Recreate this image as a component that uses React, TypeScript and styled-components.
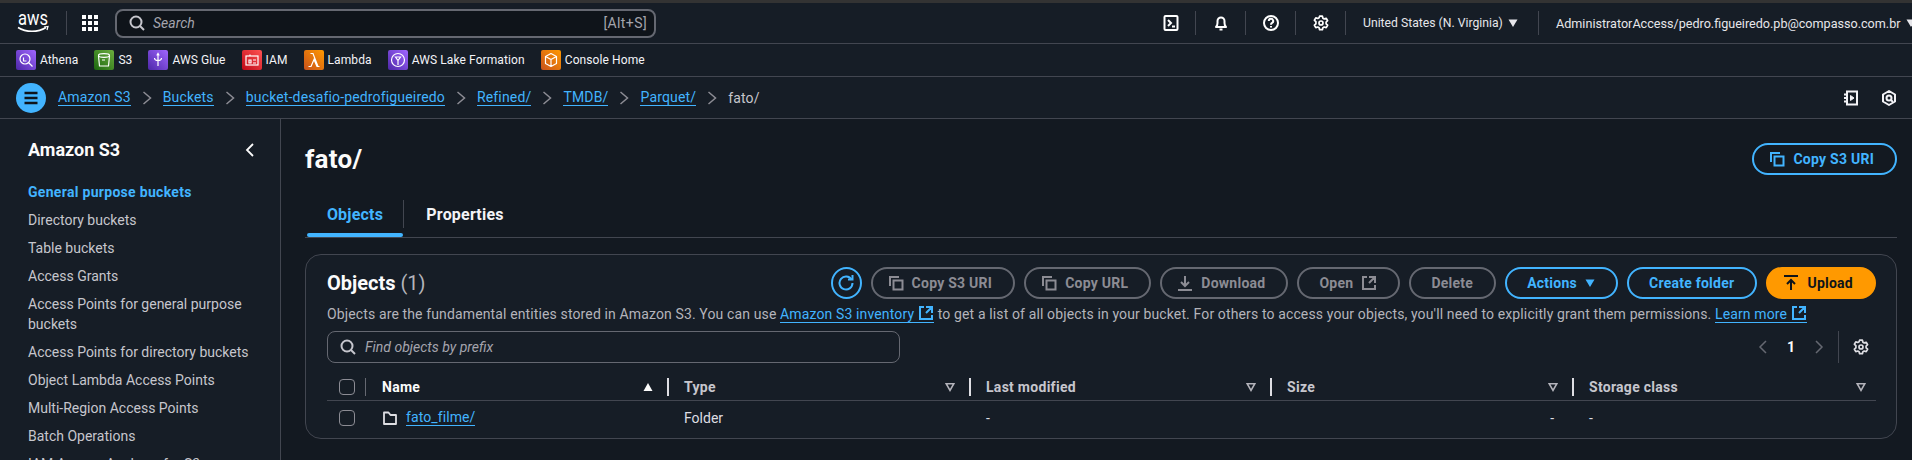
import React, { ReactNode } from 'react';
import styled, { createGlobalStyle } from 'styled-components';

const GlobalStyle = createGlobalStyle`
  html, body { margin: 0; padding: 0; background: #161d26; }
  body { font-family: Roboto, "Liberation Sans", sans-serif; font-size: 14px; color: #c6c6cd; }
  * { box-sizing: border-box; }
`;

const Page = styled.div`
  height: 100vh;
  overflow: hidden;
  display: flex;
  flex-direction: column;
  background: #161d26;
`;

const TopStrip = styled.div`
  height: 3px;
  background: #333;
`;

const TopBar = styled.header`
  height: 41px;
  display: flex;
  align-items: center;
  padding-left: 17px;
  border-bottom: 1px solid #424650;
`;

const Logo = styled.svg`
  width: 33px;
  height: 26px;
  display: block;
  overflow: visible;
  margin-right: 16px;
`;

const VRule = styled.span<{ $h?: number }>`
  width: 1px;
  height: ${(p) => p.$h ?? 24}px;
  background: #424650;
  flex: none;
`;

const GridBtn = styled.svg`
  width: 16px;
  height: 16px;
  margin: 0 17px 0 15px;
  color: #fff;
`;

const SearchBox = styled.div`
  width: 541px;
  height: 29px;
  display: flex;
  align-items: center;
  padding: 0 7px 0 12px;
  gap: 8px;
  background: #0f141a;
  border: 2px solid #656871;
  border-radius: 8px;
  color: #c6c6cd;
  font-size: 14px;
`;

const Placeholder = styled.span`
  font-style: italic;
  color: #a4a4ad;
  flex: 1;
`;

const Hint = styled.span`
  color: #a4a4ad;
  font-size: 14px;
  letter-spacing: 0.4px;
`;

const TopRight = styled.div`
  margin-left: auto;
  display: flex;
  align-items: center;
  color: #e6e6ea;
`;

const ToolBtn = styled.span`
  width: 49px;
  display: flex;
  justify-content: center;
  color: #fff;
`;

const Menu = styled.span<{ $w: number; $size: number }>`
  width: ${(p) => p.$w}px;
  display: flex;
  align-items: center;
  gap: 5px;
  padding-left: 17px;
  white-space: nowrap;
  font-size: ${(p) => p.$size}px;
`;

const FavBar = styled.nav`
  height: 33px;
  display: flex;
  align-items: center;
  padding-left: 16px;
  gap: 16px;
  border-bottom: 1px solid #424650;
`;

const Fav = styled.span`
  display: flex;
  align-items: center;
  gap: 4px;
  font-size: 12px;
  letter-spacing: 0.1px;
  color: #f3f3f7;
`;

const FavIcon = styled.svg<{ $a: string; $b: string }>`
  width: 20px;
  height: 20px;
  border-radius: 2px;
  background: linear-gradient(45deg, ${(p) => p.$a}, ${(p) => p.$b});
  color: #fff;
  flex: none;
`;

const Crumbs = styled.nav`
  height: 42px;
  display: flex;
  align-items: center;
  padding: 0 15px 0 16px;
  border-bottom: 1px solid #424650;
  font-size: 14px;
  letter-spacing: 0.16px;
`;

const Burger = styled.span`
  width: 30px;
  height: 30px;
  border-radius: 50%;
  background: #42b4ff;
  display: flex;
  align-items: center;
  justify-content: center;
  margin-right: 12px;
  color: #0f141a;
`;

const CrumbLink = styled.a`
  color: #42b4ff;
  border-bottom: 1px solid #42b4ff;
  line-height: 16px;
`;

const CrumbSep = styled.span`
  display: flex;
  color: #8c8c94;
  margin: 0 8px;
`;

const CrumbEnd = styled.span`
  color: #c6c6cd;
`;

const CrumbTools = styled.div`
  margin-left: auto;
  display: flex;
  gap: 22px;
  color: #f3f3f7;
`;

const Body = styled.div`
  flex: 1;
  min-height: 0;
  display: grid;
  grid-template-columns: 281px 1fr;
`;

const Side = styled.aside`
  border-right: 1px solid #424650;
  padding: 19px 22px 0 28px;
`;

const SideHead = styled.div`
  display: flex;
  align-items: center;
  justify-content: space-between;
  font-size: 18px;
  font-weight: 700;
  color: #fbfbfb;
  line-height: 24px;
  margin-bottom: 20px;
`;

const SideList = styled.ul`
  list-style: none;
  margin: 0 -6px 0 0;
  padding: 0;
  display: flex;
  flex-direction: column;
  gap: 8px;
`;

const SideItem = styled.li<{ $active?: boolean }>`
  line-height: 20px;
  font-size: 14px;
  color: ${(p) => (p.$active ? '#42b4ff' : '#c6c6cd')};
  font-weight: ${(p) => (p.$active ? 700 : 400)};
  letter-spacing: ${(p) => (p.$active ? '0.3px' : '0')};
`;

const Main = styled.main`
  background: #131921;
  padding: 23px 16px 0 24px;
`;

const TitleRow = styled.div`
  display: flex;
  align-items: center;
  justify-content: space-between;
  height: 34px;
`;

const Title = styled.h1`
  margin: 0;
  font-size: 26px;
  font-weight: 700;
  letter-spacing: 0.3px;
  color: #fbfbfb;
`;

const Tabs = styled.div`
  display: flex;
  align-items: flex-start;
  height: 38px;
  margin: 24px 0 16px;
  border-bottom: 1px solid #424650;
`;

const Tab = styled.span<{ $active?: boolean }>`
  width: ${(p) => (p.$active ? 97 : 122)}px;
  display: flex;
  align-items: center;
  justify-content: center;
  height: 28px;
  font-weight: 700;
  font-size: 16px;
  letter-spacing: 0.2px;
  color: ${(p) => (p.$active ? '#42b4ff' : '#f3f3f7')};
  position: relative;
  margin-left: ${(p) => (p.$active ? '2px' : '0')};
  border-right: ${(p) => (p.$active ? '1px solid #424650' : 'none')};
  &::after {
    content: '';
    display: ${(p) => (p.$active ? 'block' : 'none')};
    position: absolute;
    left: 0;
    right: 0;
    top: 33px;
    height: 4px;
    border-radius: 2px;
    background: #42b4ff;
  }
`;

const Card = styled.section`
  height: 185px;
  background: #161d26;
  border: 1px solid #424650;
  border-radius: 16px;
  padding: 12px 20px 0 21px;
`;

const CardHead = styled.div`
  display: flex;
  align-items: center;
  height: 32px;
`;

const CardTitle = styled.h2`
  margin: 0;
  font-size: 20px;
  font-weight: 700;
  color: #fbfbfb;
`;

const Count = styled.span`
  font-weight: 400;
  color: #b4b4bb;
`;

const Actions = styled.div`
  margin-left: auto;
  display: flex;
  align-items: center;
  gap: 9px;
`;

const Button = styled.span<{ $kind?: 'normal' | 'off' | 'primary'; $lead?: boolean }>`
  height: 32px;
  display: inline-flex;
  align-items: center;
  justify-content: center;
  gap: 8px;
  padding: 0 21px 0 ${(p) => (p.$lead ? 15 : 20)}px;
  border-radius: 16px;
  font-size: 14px;
  font-weight: 700;
  letter-spacing: 0.25px;
  white-space: nowrap;
  border: 2px solid
    ${(p) => (p.$kind === 'off' ? '#656871' : p.$kind === 'primary' ? '#ff9900' : '#42b4ff')};
  color: ${(p) => (p.$kind === 'off' ? '#8c8c94' : p.$kind === 'primary' ? '#0f141a' : '#42b4ff')};
  background: ${(p) => (p.$kind === 'primary' ? '#ff9900' : 'transparent')};
`;

const RoundButton = styled.span`
  width: 31px;
  height: 32px;
  border-radius: 50%;
  border: 2px solid #42b4ff;
  color: #42b4ff;
  display: flex;
  align-items: center;
  justify-content: center;
`;

const Desc = styled.p`
  margin: 5px 0 0;
  line-height: 20px;
  font-size: 14px;
  letter-spacing: 0.13px;
  color: #b4b4bb;
  white-space: nowrap;
`;

const InlineLink = styled.a`
  color: #42b4ff;
  border-bottom: 1px solid #42b4ff;
  line-height: 16px;
  svg {
    margin-left: 4px;
    vertical-align: -2px;
  }
`;

const FilterRow = styled.div`
  display: flex;
  align-items: center;
  margin-top: 7px;
  height: 32px;
`;

const Filter = styled.div`
  width: 573px;
  height: 32px;
  display: flex;
  align-items: center;
  gap: 9px;
  padding: 0 12px;
  border: 1px solid #656871;
  border-radius: 8px;
  color: #c6c6cd;
`;

const Pager = styled.div`
  margin-left: auto;
  display: flex;
  align-items: center;
  height: 32px;
`;

const PageArrow = styled.span`
  color: #656871;
  display: flex;
  width: 16px;
  justify-content: center;
`;

const PageNum = styled.span`
  width: 40px;
  text-align: center;
  font-weight: 700;
  color: #fbfbfb;
`;

const PagerGear = styled.span`
  height: 32px;
  margin-left: 11px;
  padding: 0 7px 0 14px;
  border-left: 1px solid #424650;
  display: flex;
  align-items: center;
  color: #dedee3;
`;

const Table = styled.div`
  margin-top: 10px;
`;

const TableRow = styled.div<{ $head?: boolean }>`
  display: grid;
  grid-template-columns: 38px 302px 302px 301px 302px 304px;
  align-items: center;
  height: ${(p) => (p.$head ? 28 : 33)}px;
  border-bottom: ${(p) => (p.$head ? '1px solid #424650' : 'none')};
`;

const Check = styled.span`
  width: 16px;
  height: 16px;
  margin-left: 12px;
  border: 1px solid #8c8c94;
  border-radius: 4px;
  display: block;
`;

const HeadCell = styled.div<{ $sorted?: boolean; $first?: boolean }>`
  height: 18px;
  display: flex;
  align-items: center;
  justify-content: space-between;
  padding: 0 14px 0 ${(p) => (p.$first ? 16 : 15)}px;
  font-weight: 700;
  letter-spacing: 0.28px;
  border-left: ${(p) => (p.$first ? '1px solid #656871' : '2px solid #dedee3')};
  color: ${(p) => (p.$sorted ? '#fbfbfb' : '#c6c6cd')};
  &:last-child {
    padding-right: 10px;
  }
`;

const Cell = styled.div<{ $end?: boolean }>`
  display: flex;
  align-items: center;
  gap: 8px;
  padding: 0 18px 0 17px;
  color: #dedee3;
  justify-content: ${(p) => (p.$end ? 'flex-end' : 'flex-start')};
`;

const RowLink = styled.a`
  color: #42b4ff;
  border-bottom: 1px solid #42b4ff;
  line-height: 16px;
  letter-spacing: 0.1px;
`;

function Ico({ children, size = 16, sw = 2 }: { children: ReactNode; size?: number; sw?: number }) {
  return (
    <svg width={size} height={size} viewBox="0 0 16 16" fill="none" stroke="currentColor" strokeWidth={sw} style={{ flex: 'none' }}>
      {children}
    </svg>
  );
}

const Gear = () => (
  <Ico sw={1.7}>
    <path d="M6.6 1.2h2.8l.5 2 1.3.7 2-.6 1.4 2.4-1.5 1.4v1.7l1.500 1.400-1.400 2.400-2-.6-1.300.7-.5 2H6.600l-.5-2-1.300-.7-2 .6-1.400-2.400 1.500-1.400V6.700L1.400 5.300l1.400-2.400 2 .6 1.300-.7z" strokeLinejoin="round" />
    <circle cx="8" cy="8" r="2" />
  </Ico>
);
const External = () => <Ico><path d="M14 8V2H8M14 2 8 8M6 2H2v12h12v-4" /></Ico>;
const CopyIco = () => <Ico><rect x="5.500" y="5.500" width="9" height="9" /><path d="M2 11V2h9" /></Ico>;
const SearchIco = () => <Ico><circle cx="7" cy="7" r="5.500" /><path d="M11 11l4 4" /></Ico>;
const Caret = () => <svg width="10" height="10" viewBox="0 0 10 10" fill="currentColor" style={{ flex: 'none' }}><path d="M0.500 1.500h9L5 9z" /></svg>;
const SortDown = () => <svg width="10" height="10" viewBox="0 0 10 10" fill="none" stroke="#b4b4bb" strokeWidth="1.600" style={{ flex: 'none' }}><path d="M1.300 1.800h7.400L5 8.300z" /></svg>;
const SortUp = () => <svg width="10" height="10" viewBox="0 0 10 10" fill="#fbfbfb" style={{ flex: 'none' }}><path d="M0.500 9h9L5 1z" /></svg>;
const Chevron = () => <Ico sw={1.500}><path d="M4.500 2 11.500 8l-7 6" /></Ico>;

const favourites = [
  { label: 'Athena', a: '#4d27a8', b: '#a166ff', glyph: <><circle cx="9" cy="9" r="5" /><path d="M12.500 12.500 16.500 16.500M7.500 7.500v3.500h3" /></> },
  { label: 'S3', a: '#1b660f', b: '#6cae3e', glyph: <><path d="M4.500 6l1 10h9l1-10" /><ellipse cx="10" cy="5.500" rx="5.500" ry="1.800" /><path d="M8 10h3" /></> },
  { label: 'AWS Glue', a: '#4d27a8', b: '#a166ff', glyph: <><path d="M10 16V5M6.500 8c0 2 1.500 2.500 3.500 2.500S13.500 10 13.500 8" /><path d="M8.800 5.500 10 3.500l1.200 2" /></> },
  { label: 'IAM', a: '#bd0816', b: '#ff5252', glyph: <><rect x="4" y="6" width="12" height="9" /><path d="M7 10h2v3H7zM11 10h3M11 13h3M8 6V4.500" /></> },
  { label: 'Lambda', a: '#c8511b', b: '#ff9900', glyph: <path d="M4.500 16.500h2.500l3-7 3 7h2.500M6.500 3.500H9l5 13" /> },
  { label: 'AWS Lake Formation', a: '#4d27a8', b: '#a166ff', glyph: <><circle cx="10" cy="10" r="6.500" /><path d="M7.500 7h5L10 10.500zM10 10.500V15" /></> },
  { label: 'Console Home', a: '#c8511b', b: '#ff9900', glyph: <path d="M10 3.500 15.500 6.500v7L10 16.500 4.500 13.500v-7zM4.500 6.500 10 9.500l5.500-3M10 9.500v7" strokeLinejoin="round" /> },
];

const crumbs = ['Amazon S3', 'Buckets', 'bucket-desafio-pedrofigueiredo', 'Refined/', 'TMDB/', 'Parquet/'];

const sideItems = [
  'General purpose buckets',
  'Directory buckets',
  'Table buckets',
  'Access Grants',
  'Access Points for general purpose buckets',
  'Access Points for directory buckets',
  'Object Lambda Access Points',
  'Multi-Region Access Points',
  'Batch Operations',
  'IAM Access Analyzer for S3',
];

const columns = ['Type', 'Last modified', 'Size', 'Storage class'];

export default function App() {
  return (
    <Page>
      <GlobalStyle />
      <TopStrip />
      <TopBar>
        <Logo viewBox="0 0 33 26">
          <text x="1" y="14.500" textLength="30" lengthAdjust="spacingAndGlyphs" fontFamily="Roboto, sans-serif" fontSize="20" fill="#fff">aws</text>
          <path d="M1 17.500c8 5 20 5 28 0" fill="none" stroke="#fff" strokeWidth="1.500" />
          <path d="M27 17l4-.5-1 3.500" fill="none" stroke="#fff" strokeWidth="1.200" />
        </Logo>
        <VRule />
        <GridBtn viewBox="0 0 16 16" fill="currentColor">
          {[0, 6, 12].flatMap((y) => [0, 6, 12].map((x) => <rect key={`${x}-${y}`} x={x} y={y} width="4" height="4" />))}
        </GridBtn>
        <SearchBox>
          <SearchIco />
          <Placeholder>Search</Placeholder>
          <Hint>[Alt+S]</Hint>
        </SearchBox>
        <TopRight>
          <ToolBtn>
            <Ico><rect x="1.500" y="1" width="13" height="14" rx="1" /><path d="M5 5l3 3-3 3M9 11.500h3" /></Ico>
          </ToolBtn>
          <VRule />
          <ToolBtn>
            <Ico><path d="M3 12c1-1 1.500-2 1.500-4V6a3.500 3.500 0 0 1 7 0v2c0 2 .5 3 1.500 4zM6.500 14.500h3" strokeLinejoin="round" /></Ico>
          </ToolBtn>
          <VRule />
          <ToolBtn>
            <Ico><circle cx="8" cy="8" r="7" /><path d="M5.800 6a2.200 2.200 0 1 1 3.300 1.900c-.7.400-1.100.9-1.100 1.800M8 11v1.500" /></Ico>
          </ToolBtn>
          <VRule />
          <ToolBtn><Gear /></ToolBtn>
          <VRule />
          <Menu $w={192} $size={12.2}>United States (N. Virginia)<Caret /></Menu>
          <VRule />
          <Menu $w={373} $size={12.6}>AdministratorAccess/pedro.figueiredo.pb@compasso.com.br<Caret /></Menu>
        </TopRight>
      </TopBar>
      <FavBar>
        {favourites.map((f) => (
          <Fav key={f.label}>
            <FavIcon $a={f.a} $b={f.b} viewBox="0 0 20 20" fill="none" stroke="currentColor" strokeWidth="1.200">{f.glyph}</FavIcon>
            {f.label}
          </Fav>
        ))}
      </FavBar>
      <Crumbs>
        <Burger>
          <Ico sw={2.500}><path d="M1.500 3h13M1.500 8h13M1.500 13h13" /></Ico>
        </Burger>
        {crumbs.map((c) => (
          <React.Fragment key={c}>
            <CrumbLink>{c}</CrumbLink>
            <CrumbSep><Chevron /></CrumbSep>
          </React.Fragment>
        ))}
        <CrumbEnd>fato/</CrumbEnd>
        <CrumbTools>
          <Ico><path d="M4 1.500h10v13H4zM1 4.500h4M1 8h4M1 11.500h4" /><path d="M7.500 5.500v5l3.500-2.500z" fill="currentColor" strokeWidth="1" /></Ico>
          <Ico><path d="M8 1l6 3.500v7L8 15l-6-3.500v-7z" strokeLinejoin="round" /><circle cx="8" cy="8" r="2.500" /><path d="M10 10l2 2" /></Ico>
        </CrumbTools>
      </Crumbs>
      <Body>
        <Side>
          <SideHead>
            Amazon S3
            <Ico sw={1.800}><path d="M11 2 5 8l6 6" /></Ico>
          </SideHead>
          <SideList>
            {sideItems.map((item, i) => (
              <SideItem key={item} $active={i === 0}>{item}</SideItem>
            ))}
          </SideList>
        </Side>
        <Main>
          <TitleRow>
            <Title>fato/</Title>
            <Button $lead><CopyIco />Copy S3 URI</Button>
          </TitleRow>
          <Tabs>
            <Tab $active>Objects</Tab>
            <Tab>Properties</Tab>
          </Tabs>
          <Card>
            <CardHead>
              <CardTitle>Objects <Count>(1)</Count></CardTitle>
              <Actions>
                <RoundButton>
                  <Ico><path d="M10 4.500h4.500V0" /><path d="M14.500 8A6.500 6.500 0 1 1 13.600 4.700" /></Ico>
                </RoundButton>
                <Button $kind="off" $lead><CopyIco />Copy S3 URI</Button>
                <Button $kind="off" $lead><CopyIco />Copy URL</Button>
                <Button $kind="off" $lead><Ico><path d="M8 1v10M4 7l4 4 4-4M1 15h14" /></Ico>Download</Button>
                <Button $kind="off">Open<External /></Button>
                <Button $kind="off">Delete</Button>
                <Button>Actions<Caret /></Button>
                <Button>Create folder</Button>
                <Button $kind="primary" $lead><Ico><path d="M8 15V5M4 9l4-4 4 4M1 1h14" /></Ico>Upload</Button>
              </Actions>
            </CardHead>
            <Desc>
              Objects are the fundamental entities stored in Amazon S3. You can use{' '}
              <InlineLink>Amazon S3 inventory<External /></InlineLink>{' '}
              to get a list of all objects in your bucket. For others to access your objects, you'll need to explicitly grant them permissions.{' '}
              <InlineLink>Learn more<External /></InlineLink>
            </Desc>
            <FilterRow>
              <Filter>
                <SearchIco />
                <Placeholder>Find objects by prefix</Placeholder>
              </Filter>
              <Pager>
                <PageArrow><Ico sw={1.500}><path d="M11 2 5 8l6 6" /></Ico></PageArrow>
                <PageNum>1</PageNum>
                <PageArrow><Ico sw={1.500}><path d="M5 2l6 6-6 6" /></Ico></PageArrow>
                <PagerGear><Gear /></PagerGear>
              </Pager>
            </FilterRow>
            <Table>
              <TableRow $head>
                <Check />
                <HeadCell $sorted $first>Name<SortUp /></HeadCell>
                {columns.map((c) => (
                  <HeadCell key={c}>{c}<SortDown /></HeadCell>
                ))}
              </TableRow>
              <TableRow>
                <Check />
                <Cell>
                  <Ico sw={1.800}><path d="M2 14V2.500h4.500l2 2.500H14v9z" strokeLinejoin="round" /></Ico>
                  <RowLink>fato_filme/</RowLink>
                </Cell>
                <Cell>Folder</Cell>
                <Cell>-</Cell>
                <Cell $end>-</Cell>
                <Cell>-</Cell>
              </TableRow>
            </Table>
          </Card>
        </Main>
      </Body>
    </Page>
  );
}
